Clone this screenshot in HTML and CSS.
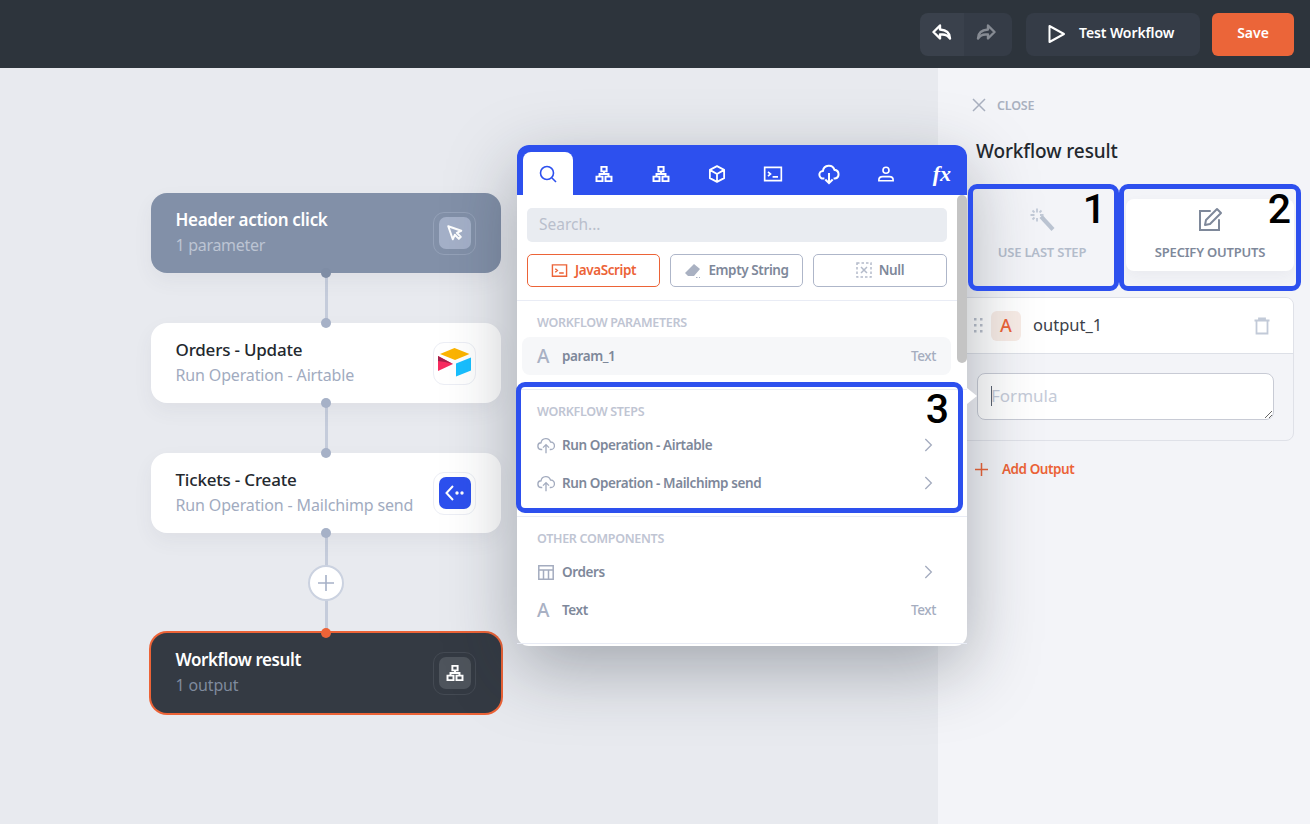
FILE: index.html
```html
<!DOCTYPE html>
<html lang="en">

<head>
    <meta charset="UTF-8">
    <title>Workflow result</title>
    <link rel="stylesheet" href="styles.css">
</head>

<body>
    <svg class="icon-defs" width="0" height="0">
        <symbol id="i-tree" viewBox="0 0 24 24"><path d="M8.5 2.5h7v6h-7zM2 15.5h8v6H2zM14 15.5h8v6h-8zM12 8.500v3.500M6 15.500V12h12v3.500" fill="none" stroke="currentColor" stroke-width="2.600"/></symbol>
        <symbol id="i-term" viewBox="0 0 24 24"><path d="M2 4h20v16H2zM6 9.500l3 2.500-3 2.500M11.500 15.500H18" fill="none" stroke="currentColor" stroke-width="2"/></symbol>
        <symbol id="i-up" viewBox="0 0 24 24"><path d="M7 18H6a4.500 4.500 0 0 1-.6-9A6.500 6.500 0 0 1 18 8a5 5 0 0 1 .5 10H17M12 23V11.500M8 15.500l4-4 4 4" fill="none" stroke="currentColor" stroke-width="1.800"/></symbol>
        <symbol id="i-next" viewBox="0 0 24 24"><path d="m8 3 9 9-9 9" fill="none" stroke="currentColor" stroke-width="2"/></symbol>
    </svg>

    <header class="topbar">
        <div class="history">
            <button class="history-btn">
                <svg width="20" height="18" viewBox="0 0 20 18"><path d="M8 1.500 1.500 8 8 14.500v-4h2.500c3 0 5.500 1.200 7.500 4 0-5.500-3.500-8.500-10-9z" fill="none" stroke="#fff" stroke-width="2.400" stroke-linejoin="round"/></svg>
            </button>
            <button class="history-btn history-redo">
                <svg width="20" height="18" viewBox="0 0 20 18"><path d="m12 1.500 6.500 6.500-6.500 6.500v-4H9.500c-3 0-5.500 1.200-7.500 4 0-5.500 3.500-8.500 10-9z" fill="none" stroke="#868b93" stroke-width="2.400" stroke-linejoin="round"/></svg>
            </button>
        </div>
        <button class="test-btn">
            <svg width="19" height="20" viewBox="0 0 19 20"><path d="M2.500 2v16L17 10z" fill="none" stroke="#fff" stroke-width="2" stroke-linejoin="round"/></svg>
            Test Workflow
        </button>
        <button class="save-btn">Save</button>
    </header>

    <main class="workspace">
        <section class="canvas">
            <div class="node node-trigger">
                <div class="node-text">
                    <div class="node-title">Header action click</div>
                    <div class="node-sub">1 parameter</div>
                </div>
                <div class="node-icon">
                    <span class="node-icon-inner">
                        <svg width="18" height="18" viewBox="0 0 20 20"><path d="M2.500 2.500 17 7.500l-5 2.300 4.500 4.500-2.200 2.200-4.500-4.500-2.300 5z" fill="none" stroke="#fff" stroke-width="2.200" stroke-linejoin="round"/></svg>
                    </span>
                </div>
            </div>
            <div class="link"></div>
            <div class="node">
                <div class="node-text">
                    <div class="node-title">Orders - Update</div>
                    <div class="node-sub">Run Operation - Airtable</div>
                </div>
                <div class="node-icon">
                    <svg class="airtable" width="34" height="30" viewBox="0 0 34 30">
                        <path d="M16.500 0 31.500 6 17 12 2 6z" fill="#fcb400"/>
                        <path d="M18 15.500 33 9.500v13l-15 6z" fill="#18bfff"/>
                        <path d="M0 8v15l15-7z" fill="#f82b60"/>
                        <path d="M0 8l15 8-8-2-7-1z" fill="#a5214a"/>
                    </svg>
                </div>
            </div>
            <div class="link"></div>
            <div class="node">
                <div class="node-text">
                    <div class="node-title">Tickets - Create</div>
                    <div class="node-sub">Run Operation - Mailchimp send</div>
                </div>
                <div class="node-icon">
                    <span class="node-icon-inner node-icon-blue">
                        <svg width="20" height="16" viewBox="0 0 20 16"><path d="M8 1 1.500 8 8 15" fill="none" stroke="#fff" stroke-width="2"/><circle cx="12" cy="8" r="1.700" fill="#fff"/><circle cx="17" cy="8" r="1.700" fill="#fff"/></svg>
                    </span>
                </div>
            </div>
            <div class="link link-add">
                <button class="add-step">
                    <svg width="18" height="18" viewBox="0 0 18 18"><path d="M9 1v16M1 9h16" stroke="#a6b1c7" stroke-width="1.600"/></svg>
                </button>
            </div>
            <div class="node node-result">
                <div class="node-text">
                    <div class="node-title">Workflow result</div>
                    <div class="node-sub">1 output</div>
                </div>
                <div class="node-icon">
                    <span class="node-icon-inner"><svg class="white" width="18" height="18"><use href="#i-tree"/></svg></span>
                </div>
            </div>
        </section>

        <aside class="panel">
            <div class="close-row">
                <svg width="14" height="14" viewBox="0 0 14 14"><path d="m1 1 12 12M13 1 1 13" stroke="#a9b0bf" stroke-width="1.500"/></svg>
                CLOSE
            </div>
            <h2 class="panel-title">Workflow result</h2>
            <div class="tabs">
                <div class="tab">
                    <svg width="26" height="26" viewBox="0 0 26 26"><path d="m10.500 11 3-3L25.500 21l-3 3z" fill="#bac3d1"/><path d="M8 1.500v4M8 11v3.500M1.500 8h4M11 8h3.500M3.500 3.500 5.500 5.500M12.500 3.500l-2 2M3.500 12.500l2-2" stroke="#c2cad7" stroke-width="1.800"/></svg>
                    USE LAST STEP
                </div>
                <div class="tab tab-on">
                    <svg width="26" height="26" viewBox="0 0 26 26"><path d="M13 4H3v19h19V13" fill="none" stroke="#7e889a" stroke-width="2" stroke-linecap="round"/><path d="m20 2 4 4-11 11-5 1 1-5z" fill="none" stroke="#7e889a" stroke-width="2" stroke-linejoin="round"/></svg>
                    SPECIFY OUTPUTS
                </div>
            </div>

            <div class="output-card">
                <div class="output-head">
                    <svg class="grip" width="9" height="15" viewBox="0 0 9 15"><path d="M0 0h2.500v2.500H0zM6 0h2.500v2.500H6zM0 6h2.500v2.500H0zM6 6h2.500v2.500H6zM0 12h2.500v2.500H0zM6 12h2.500v2.500H6z" fill="#b9bfcb"/></svg>
                    <span class="type-badge">A</span>
                    <span class="output-name">output_1</span>
                    <svg class="trash" width="18" height="18" viewBox="0 0 18 18"><path d="M1.500 3.500h15M6 3.500V1.500h6v2M3.500 3.500v13h11v-13" fill="none" stroke="#c2cad8" stroke-width="1.800"/></svg>
                </div>
                <div class="output-body">
                    <textarea class="formula" placeholder="Formula"></textarea>
                </div>
            </div>
            <div class="add-output">
                <svg width="13" height="13" viewBox="0 0 13 13"><path d="M6.500 0v13M0 6.500h13" stroke="#ec6337" stroke-width="1.500"/></svg>
                Add Output
            </div>
        </aside>

        <div class="picker">
            <nav class="picker-tabs">
                <span class="picker-tab picker-tab-on">
                    <svg width="18" height="18" viewBox="0 0 18 18"><circle cx="8" cy="8" r="6.500" fill="none" stroke="#2d50ee" stroke-width="1.600"/><path d="m13 13 4 4" stroke="#2d50ee" stroke-width="1.600"/></svg>
                </span>
                <span class="picker-tab"><svg width="18" height="18"><use href="#i-tree"/></svg></span>
                <span class="picker-tab"><svg width="18" height="18"><use href="#i-tree"/></svg></span>
                <span class="picker-tab">
                    <svg width="18" height="18" viewBox="0 0 24 24"><path d="M12 1.500 21.500 6.500v11L12 22.500l-9.500-5v-11zM2.500 6.500 12 12l9.500-5.500M12 12v10.500" fill="none" stroke="#fff" stroke-width="2.400" stroke-linejoin="round"/></svg>
                </span>
                <span class="picker-tab"><svg width="20" height="20"><use href="#i-term"/></svg></span>
                <span class="picker-tab">
                    <svg width="22" height="22" viewBox="0 0 24 24"><path d="M7 17H6a4.200 4.200 0 0 1-.6-8.400A6.500 6.500 0 0 1 18 7.500 4.800 4.800 0 0 1 18.500 17H17M12 11v11M8 18l4 4 4-4" fill="none" stroke="#fff" stroke-width="2.200"/></svg>
                </span>
                <span class="picker-tab">
                    <svg width="18" height="18" viewBox="0 0 24 24"><circle cx="12" cy="7" r="4" fill="none" stroke="#fff" stroke-width="2.200"/><path d="M2.500 21v-1c0-2.500 2-4.500 5-4.500h9c3 0 5 2 5 4.500v1z" fill="none" stroke="#fff" stroke-width="2.200"/></svg>
                </span>
                <span class="picker-tab picker-fx">fx</span>
            </nav>

            <div class="picker-top">
                <input class="picker-search" type="text" placeholder="Search...">
                <div class="quick-btns">
                    <button class="quick quick-on"><svg width="17" height="17"><use href="#i-term"/></svg>JavaScript</button>
                    <button class="quick">
                        <svg width="17" height="17" viewBox="0 0 17 17"><path d="M10 2 16 7l-6 7H4L1 11z" fill="#a9b1c2"/><path d="M12 15.500h1.500M15 15.500h1" stroke="#a9b1c2"/></svg>
                        Empty String
                    </button>
                    <button class="quick">
                        <svg width="16" height="16" viewBox="0 0 16 16"><path d="M1 1h14v14H1z" fill="none" stroke="#b4bbca" stroke-width="1.500" stroke-dasharray="2.500 2"/><path d="m5 5 6 6M11 5l-6 6" stroke="#b4bbca" stroke-width="1.500"/></svg>
                        Null
                    </button>
                </div>
            </div>

            <div class="group">
                <div class="group-title">WORKFLOW PARAMETERS</div>
                <div class="row row-hover"><span class="row-a">A</span><span class="row-label">param_1</span><span class="row-type">Text</span></div>
            </div>
            <div class="group">
                <div class="group-title">WORKFLOW STEPS</div>
                <div class="row"><svg class="row-icon" width="18" height="18"><use href="#i-up"/></svg><span class="row-label">Run Operation - Airtable</span><svg class="row-next" width="16" height="16"><use href="#i-next"/></svg></div>
                <div class="row"><svg class="row-icon" width="18" height="18"><use href="#i-up"/></svg><span class="row-label">Run Operation - Mailchimp send</span><svg class="row-next" width="16" height="16"><use href="#i-next"/></svg></div>
            </div>
            <div class="group">
                <div class="group-title">OTHER COMPONENTS</div>
                <div class="row">
                    <svg class="row-icon" width="16" height="15" viewBox="0 0 16 15"><path d="M.8.800h14.400v13.400H.8zM.8 5h14.400M5.500 5v9M10.500 5v9" fill="none" stroke="currentColor" stroke-width="1.500"/></svg>
                    <span class="row-label">Orders</span><svg class="row-next" width="16" height="16"><use href="#i-next"/></svg>
                </div>
                <div class="row"><span class="row-a">A</span><span class="row-label">Text</span><span class="row-type">Text</span></div>
            </div>
            <div class="picker-scroll"></div>
        </div>

        <div class="callout callout-1"><span>1</span></div>
        <div class="callout callout-2"><span>2</span></div>
        <div class="callout callout-3"><span>3</span></div>
    </main>
</body>

</html>
```

FILE: styles.css
```css
* {
    box-sizing: border-box;
}

html, body {
    height: 100%;
}

body {
    margin: 0;
    display: flex;
    flex-direction: column;
    overflow: hidden;
    font-family: "Noto Sans", sans-serif;
    color: #23282e;
    background-color: #e8eaef;
}

button {
    font-family: inherit;
    border: none;
    cursor: pointer;
}

.icon-defs {
    position: absolute;
}

/* top bar */
.topbar {
    height: 68px;
    flex: none;
    display: flex;
    justify-content: flex-end;
    align-items: center;
    gap: 12px;
    padding: 0 16px 0 0;
    background-color: #2d343c;
}

.history {
    display: flex;
    margin-right: 2px;
    height: 43px;
    border-radius: 8px;
    overflow: hidden;
}

.history-btn {
    width: 44px;
    display: flex;
    align-items: center;
    justify-content: center;
    padding: 0 0 2px 0;
    background-color: #3a414c;
}

.history-redo {
    width: 48px;
    padding-right: 4px;
    background-color: #353c47;
}

.test-btn {
    width: 174px;
    height: 43px;
    display: flex;
    align-items: center;
    gap: 13px;
    padding: 0 0 3px 21px;
    border-radius: 8px;
    font-size: 14px;
    font-weight: 600;
    letter-spacing: -0.1px;
    color: #fff;
    background-color: #353c47;
}

.test-btn svg {
    margin-top: 3px;
}

.save-btn {
    width: 82px;
    height: 43px;
    padding: 0 0 3px 0;
    border-radius: 6px;
    font-size: 14px;
    font-weight: 600;
    color: #fff;
    background-color: #eb6539;
}

.workspace {
    flex: 1;
    display: flex;
    position: relative;
}

/* workflow canvas */
.canvas {
    flex: 1;
    display: flex;
    flex-direction: column;
    align-items: flex-start;
    padding: 125px 0 0 151px;
}

.node {
    position: relative;
    width: 350px;
    height: 80px;
    display: flex;
    align-items: center;
    justify-content: space-between;
    padding: 0 25px 0 24.500px;
    border-radius: 16px;
    background-color: #fff;
    box-shadow: 0 8px 20px rgba(60, 70, 90, 0.06);
}

.node::before,
.node::after {
    content: "";
    position: absolute;
    left: 170px;
    width: 10px;
    height: 10px;
    border-radius: 50%;
    background-color: #a6b1c7;
}

.node::before {
    top: -5px;
}

.node::after {
    bottom: -5px;
}

.node-title {
    margin-top: -1px;
    font-size: 17px;
    font-weight: 500;
    letter-spacing: -0.2px;
    line-height: 25px;
}

.node-sub {
    margin-top: 1px;
    font-size: 16px;
    letter-spacing: -0.15px;
    line-height: 25px;
    color: #a1abc0;
}

.node-icon {
    width: 43px;
    height: 43px;
    display: flex;
    align-items: center;
    justify-content: center;
    border: 1px solid #eceef5;
    border-radius: 11px;
}

.node-icon-inner {
    width: 32px;
    height: 32px;
    display: flex;
    align-items: center;
    justify-content: center;
    border-radius: 7px;
}

.node-icon-blue {
    background-color: #2d50ee;
}

.node-trigger {
    background-color: #8290a8;
}

.node-trigger::before {
    display: none;
}

.node-trigger::after {
    background-color: #7f8da5;
}

.node-trigger .node-title {
    font-weight: 600;
    letter-spacing: -0.3px;
    color: #fff;
}

.node-trigger .node-sub {
    letter-spacing: -0.3px;
    color: #bcc4d3;
}

.node-trigger .node-icon {
    border-color: #94a1b8;
}

.node-trigger .node-icon-inner {
    background-color: #a4b0c8;
}

.node-result {
    background-color: #343a43;
    box-shadow: 0 0 0 2px #ec6337;
}

.node-result::before {
    background-color: #ec6337;
}

.node-result::after {
    display: none;
}

.node-result .node-title {
    font-weight: 600;
    letter-spacing: -0.4px;
    color: #fff;
}

.node-result .node-sub {
    color: #7f8a9d;
}

.node-result .node-icon {
    border-color: #444a53;
}

.node-result .node-icon-inner {
    background-color: #4e545c;
}

.white {
    color: #fff;
}

.link {
    width: 350px;
    height: 50px;
    display: flex;
    align-items: center;
    justify-content: center;
    background: linear-gradient(#c5ccdb, #c5ccdb) center / 3px 100% no-repeat;
}

.link-add {
    height: 100px;
}

.add-step {
    width: 36px;
    height: 36px;
    display: flex;
    align-items: center;
    justify-content: center;
    padding: 0;
    border: 2px solid #cbd2e0;
    border-radius: 50%;
    background-color: #fff;
}

/* right panel */
.panel {
    width: 372px;
    flex: none;
    padding: 28px 16px 0 20px;
    background-color: #f3f4f8;
}

.close-row {
    display: flex;
    align-items: center;
    gap: 11px;
    height: 18px;
    margin-left: 14px;
    font-size: 12.500px;
    font-weight: 600;
    letter-spacing: -0.2px;
    color: #a9b0bf;
}

.panel-title {
    margin: 23px 0 0 18px;
    font-size: 19px;
    line-height: 28px;
    font-weight: 500;
    letter-spacing: -0.1px;
}

.tabs {
    display: grid;
    grid-template-columns: 1fr 1fr;
    margin-top: 34px;
}

.tab {
    height: 72px;
    display: flex;
    flex-direction: column;
    align-items: center;
    justify-content: flex-end;
    gap: 10px;
    padding-bottom: 10px;
    border-radius: 8px;
    font-size: 13px;
    font-weight: 600;
    letter-spacing: -0.2px;
    color: #b3bccb;
}

.tab-on {
    color: #7e889a;
    background-color: #fff;
    box-shadow: 0 6px 14px rgba(70, 80, 100, 0.05);
}

.output-card {
    margin-top: 26px;
    border: 1px solid #dfe1e8;
    border-radius: 8px;
    overflow: hidden;
}

.output-head {
    height: 56px;
    display: flex;
    align-items: center;
    padding-left: 15px;
    background-color: #fff;
    border-bottom: 1px solid #dde0e7;
}

.type-badge {
    width: 30px;
    height: 30px;
    margin-left: 8px;
    display: flex;
    align-items: center;
    justify-content: center;
    padding-bottom: 1px;
    border-radius: 6px;
    font-size: 18px;
    font-weight: 500;
    color: #ec6337;
    background-color: #f8ece6;
}

.output-name {
    flex: 1;
    margin: 0 0 2px 12px;
    font-size: 16.500px;
    color: #3b4149;
}

.trash {
    margin-right: 22px;
}

.output-body {
    position: relative;
    padding: 19px 19px 20px 18px;
}

/* caret of the focused field */
.output-body::after {
    content: "";
    position: absolute;
    left: 32px;
    top: 32px;
    width: 1px;
    height: 20px;
    background-color: #5a6270;
}

.formula {
    display: block;
    width: 297px;
    height: 47px;
    padding: 10px 13px;
    border: 1px solid #c8cbd5;
    border-radius: 8px;
    font-family: inherit;
    font-size: 17px;
    line-height: 24px;
    outline: none;
    background-color: #fff;
}

.formula::placeholder {
    color: #c5cbd8;
}

.add-output {
    display: flex;
    align-items: center;
    gap: 14px;
    margin: 19px 0 0 17px;
    font-size: 13.500px;
    font-weight: 600;
    letter-spacing: -0.45px;
    color: #ec6337;
}

/* popup list */
.picker {
    position: absolute;
    left: 517px;
    top: 77px;
    width: 450px;
    height: 501px;
    border-radius: 12px;
    background-color: #fff;
    box-shadow: 0 22px 70px rgba(30, 38, 50, 0.34);
}

.picker::after {
    content: "";
    position: absolute;
    left: 450px;
    top: 243px;
    border-left: 10px solid #fff;
    border-top: 8px solid transparent;
    border-bottom: 8px solid transparent;
}

.picker-tabs {
    height: 50px;
    display: flex;
    align-items: flex-end;
    gap: 6.300px;
    padding-left: 6px;
    border-radius: 12px 12px 0 0;
    background-color: #2d50ee;
}

.picker-tab {
    width: 50px;
    height: 43px;
    display: flex;
    align-items: center;
    justify-content: center;
    border-radius: 8px 8px 0 0;
    color: #fff;
}

.picker-tab-on {
    background-color: #fff;
}

.picker-fx {
    font-family: "Liberation Serif", serif;
    font-size: 22px;
    font-style: italic;
    font-weight: 700;
}

.picker-top {
    padding: 13px 20px 13px 10px;
    border-bottom: 1px solid #e9ecf5;
}

.picker-search {
    display: block;
    width: 420px;
    height: 34px;
    padding: 0 12px 2px;
    border: none;
    border-radius: 5px;
    font-family: inherit;
    font-size: 15.500px;
    background-color: #e9ecf1;
}

.picker-search::placeholder {
    color: #b9bfcc;
}

.quick-btns {
    display: grid;
    grid-template-columns: 133px 133px 134px;
    gap: 10px;
    margin-top: 12px;
}

.quick {
    height: 33px;
    display: flex;
    align-items: center;
    justify-content: center;
    gap: 7px;
    padding: 0 0 1px 0;
    border: 1px solid #aeb6c9;
    border-radius: 5px;
    font-size: 13.500px;
    font-weight: 600;
    letter-spacing: -0.4px;
    color: #7e889a;
    background-color: #fff;
}

.quick-on {
    border-color: #ec6337;
    color: #ec6337;
}

.group {
    height: 89px;
    padding: 13px 16px 0 5px;
    border-bottom: 1px solid #e9ecf5;
}

.group + .group {
    height: 127px;
}

.group-title {
    height: 18px;
    padding-left: 15px;
    margin-bottom: 5px;
    font-size: 12.500px;
    line-height: 18px;
    font-weight: 600;
    letter-spacing: -0.3px;
    color: #bfc5d3;
}

.row {
    height: 38px;
    display: flex;
    align-items: center;
    padding: 0 15px;
    border-radius: 8px;
    font-size: 13.500px;
    font-weight: 600;
    letter-spacing: -0.4px;
    color: #7e889a;
}

.row-hover {
    background-color: #f6f7f9;
}

.row-a {
    width: 25px;
    font-size: 19px;
    line-height: 20px;
    font-weight: 500;
    letter-spacing: 0;
    color: #a9b1c4;
}

.row-icon {
    width: 25px;
    padding-right: 7px;
    color: #a4acbf;
}

.row-label {
    flex: 1;
}

.row-type {
    font-weight: 500;
    color: #a5adbf;
}

.row-next {
    color: #a4acbf;
}

.picker-scroll {
    position: absolute;
    right: 0;
    top: 50px;
    width: 10px;
    height: 168px;
    border-radius: 5px;
    background-color: #c4c4c4;
}

/* numbered marks drawn over the screen */
.callout {
    position: absolute;
    top: 116px;
    height: 107px;
    display: flex;
    justify-content: flex-end;
    padding-top: 1px;
    border: 5px solid #2d50ee;
    border-radius: 9px;
    font-family: "Roboto", sans-serif;
    font-size: 41px;
    font-weight: 500;
    line-height: 38px;
    color: #000;
}

.callout-1 {
    left: 968px;
    width: 151px;
    padding-right: 8px;
}

.callout-2 {
    left: 1119px;
    width: 182px;
    padding-right: 5px;
}

.callout-3 {
    left: 516px;
    top: 314px;
    width: 447px;
    height: 131px;
    padding-right: 9px;
    padding-top: 3px;
}
```
